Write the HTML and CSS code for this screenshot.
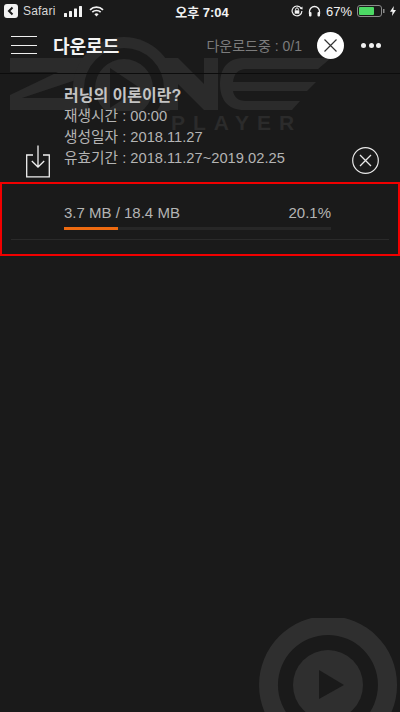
FILE: index.html
```html
<!DOCTYPE html>
<html lang="ko">
<head>
<meta charset="utf-8">
<title>다운로드</title>
<link rel="stylesheet" href="styles.css">
</head>
<body>
<div class="screen">
  <svg class="wm-logo" width="340" height="100" viewBox="0 35 340 100">
    <defs><clipPath id="logo-clip"><rect x="0" y="30" width="340" height="81"/></clipPath></defs>
    <g fill="#2b2b2b">
      <g clip-path="url(#logo-clip)">
        <path d="M10 58H100V72L22 98H100V110H10V95L58 72H10Z"/>
        <circle cx="124" cy="88" r="51"/>
        <circle cx="124" cy="88" r="40" fill="#1a1a1a"/>
        <circle cx="124" cy="88" r="29"/>
        <path fill="#1a1a1a" d="M110 68L140 88 110 108Z"/>
      </g>
      <path d="M164 58H178L204 84V58H218V110H204L178 84V110H164Z"/>
      <path d="M244 58H331L318 69H246C238 69 234 74 233 82H316L307 91H233C234 97 238 101 246 101H300L292 110H244C228 110 220 100 220 84S228 58 244 58Z"/>
    </g>
    <text class="wm-text" x="171" y="130">PLAYER</text>
  </svg>
  <svg class="wm-disc" width="148" height="94" viewBox="0 0 148 94">
    <path fill="#2f2f2f" fill-rule="evenodd" d="M76-2A69 69 0 1 0 76.100 136 69 69 0 1 0 76-2ZM76 17A50 50 0 1 1 75.900 117 50 50 0 1 1 76 17Z"/>
    <circle cx="76" cy="67" r="35" fill="#2f2f2f"/>
    <path fill="#1a1a1a" d="M67 52L92 67 67 81Z"/>
  </svg>

  <div class="status">
    <div class="status-side">
      <svg class="i-back" width="14" height="14" viewBox="0 0 14 14"><rect width="14" height="14" rx="3" fill="#f2f2f2"/><path d="M8.500 3.500L5 7l3.500 3.500" fill="none" stroke="#1a1a1a" stroke-width="2"/></svg>
      <span class="st-app">Safari</span>
      <svg class="i-signal" width="18" height="11" viewBox="0 0 18 11"><g fill="#f2f2f2"><rect y="7" width="3" height="4" rx=".5"/><rect x="5" y="5" width="3" height="6" rx=".5"/><rect x="10" y="2.500" width="3" height="8.500" rx=".5"/><rect x="15" width="3" height="11" rx=".5"/></g></svg>
      <svg class="i-wifi" width="15" height="11" viewBox="0 0 15 11"><g fill="none" stroke="#f2f2f2" stroke-width="1.700"><path d="M1 3.800a9.300 9.300 0 0 1 13 0"/><path d="M3.300 6.200a6 6 0 0 1 8.400 0"/></g><path fill="#f2f2f2" d="M5.400 8.200a3 3 0 0 1 4.200 0L7.500 10.600Z"/></svg>
    </div>
    <span class="st-time">오후 7:04</span>
    <div class="status-side status-right">
      <svg width="12" height="12" viewBox="0 0 12 12"><path d="M10.200 3.400A4.900 4.900 0 1 0 10.900 6" fill="none" stroke="#f2f2f2" stroke-width="1.200"/><path fill="#f2f2f2" d="M8.800 3.800L11.400 1.400 11.600 4.400Z"/><rect x="3.700" y="5.300" width="4.600" height="3.400" fill="#f2f2f2"/><path d="M4.600 5.300V4.300a1.400 1.400 0 0 1 2.800 0v1" fill="none" stroke="#f2f2f2"/></svg>
      <svg width="13" height="12" viewBox="0 0 13 12"><path d="M1.500 9V6.500a5 5 0 0 1 10 0V9" fill="none" stroke="#f2f2f2" stroke-width="1.300"/><rect x="1" y="7" width="2.500" height="4.500" rx="1" fill="#f2f2f2"/><rect x="9.500" y="7" width="2.500" height="4.500" rx="1" fill="#f2f2f2"/></svg>
      <span class="st-batt">67%</span>
      <svg width="28" height="12" viewBox="0 0 28 12"><rect x=".5" y=".5" width="24" height="11" rx="2.500" fill="none" stroke="#8a8a8a"/><rect x="2" y="2" width="15" height="8" rx="1" fill="#4cd964"/><rect x="26" y="4" width="1.500" height="4" fill="#8a8a8a"/></svg>
      <svg width="6" height="10" viewBox="0 0 6 10"><path fill="#f2f2f2" d="M3.800 0L0 5.800H2.500L2 10 6 4H3.400Z"/></svg>
    </div>
  </div>

  <header class="header">
    <button class="menu" type="button" aria-label="메뉴"><span></span><span></span><span></span></button>
    <h1 class="title">다운로드</h1>
    <span class="count">다운로드중 : 0/1</span>
    <svg class="close-all" width="27" height="27" viewBox="0 0 27 27"><circle cx="13.500" cy="13.500" r="13.500" fill="#fff"/><path d="M7.500 7.500l12 12M19.500 7.500l-12 12" stroke="#333" stroke-width="1.200"/></svg>
    <div class="dots"><i></i><i></i><i></i></div>
  </header>

  <section class="item">
    <svg class="i-dl" width="24" height="33" viewBox="0 0 24 33"><g fill="none" stroke="#f0f0f0" stroke-width="1.300"><path d="M7 10H.7V31.800H23.300V10H17"/><path d="M12 .5V22M5.800 16L12 22l6.200-6"/></g></svg>
    <div class="info">
      <h2 class="item-title">러닝의 이론이란?</h2>
      <p>재생시간 : 00:00</p>
      <p>생성일자 : 2018.11.27</p>
      <p>유효기간 : 2018.11.27~2019.02.25</p>
    </div>
    <svg class="i-cancel" width="27" height="27" viewBox="0 0 27 27"><circle cx="13.500" cy="13.500" r="12.800" fill="none" stroke="#e8e8e8" stroke-width="1.200"/><path d="M8 8l11 11M19 8L8 19" stroke="#e8e8e8" stroke-width="1.300"/></svg>
  </section>

  <section class="progress-box">
    <div class="progress-row">
      <span>3.7 MB / 18.4 MB</span>
      <span>20.1%</span>
    </div>
    <div class="track"><div class="fill" style="width:20.1%"></div></div>
    <div class="divider"></div>
  </section>
</div>
</body>
</html>
```

FILE: styles.css
```css
* { box-sizing: border-box; }
html, body { margin: 0; padding: 0; }
body { background: #1a1a1a; font-family: "Liberation Sans", "Noto Sans CJK KR", sans-serif; color: #b4b4b4; }
.screen { position: relative; width: 400px; height: 712px; overflow: hidden; background: #1a1a1a; }
.wm-logo { position: absolute; left: 0; top: 35px; }
.wm-text { font: bold 21px "Liberation Sans", sans-serif; fill: #2b2b2b; letter-spacing: 8px; }
.wm-disc { position: absolute; right: 0; bottom: 0; }

.status { position: relative; height: 22px; padding: 0 4px; display: flex; align-items: center; justify-content: space-between; color: #f2f2f2; font-size: 12px; }
.status-side { display: flex; align-items: center; width: 150px; }
.status-right { justify-content: flex-end; gap: 5px; }
.st-app { margin-left: 5px; color: #d8d8d8; letter-spacing: .2px; }
.i-signal { margin-left: 8px; }
.i-wifi { margin-left: 7px; }
.st-time { margin-left: 4px; font-weight: 700; font-size: 13px; }
.st-batt { font-size: 13px; }

.header { position: relative; height: 52px; padding: 0 19px 5px 11px; display: flex; align-items: center; border-bottom: 1px solid #0c0c0c; }
.menu { width: 26px; height: 18px; padding: 0; border: 0; background: none; display: flex; flex-direction: column; justify-content: space-between; }
.menu span { display: block; height: 1px; background: #f0f0f0; }
.title { margin: 0 0 0 16px; font-size: 18px; font-weight: 700; color: #f4f4f4; }
.count { margin-left: auto; font-size: 14px; color: #7c7c7c; }
.close-all { margin-left: 15px; }
.dots { margin-left: 17px; display: flex; gap: 2.500px; }
.dots i { width: 5px; height: 5px; border-radius: 50%; background: #f0f0f0; }

.item { position: relative; height: 108px; padding: 12px 21px 0 26px; display: flex; align-items: flex-start; }
.i-dl { margin-top: 59px; flex: none; }
.info { margin-left: 14px; flex: 1; }
.info p { margin: 0; height: 21px; font-size: 14.700px; line-height: 21px; color: #b4b4b4; }
.item-title { margin: 0; font-size: 16px; line-height: 20px; font-weight: 700; color: #c4c4c4; }
.i-cancel { margin-top: 61px; flex: none; }

.progress-box { position: relative; height: 74px; border: 2px solid #f00000; padding: 20px 9px 0; }
.progress-row { display: flex; justify-content: space-between; padding: 0 58px 0 53px; font-size: 15px; line-height: 18px; color: #b4b4b4; }
.track { height: 3px; margin: 5px 58px 0 53px; background: #272727; }
.fill { height: 100%; background: #ee6a10; }
.divider { height: 1px; margin-top: 9px; background: #2a2a2a; }
```
